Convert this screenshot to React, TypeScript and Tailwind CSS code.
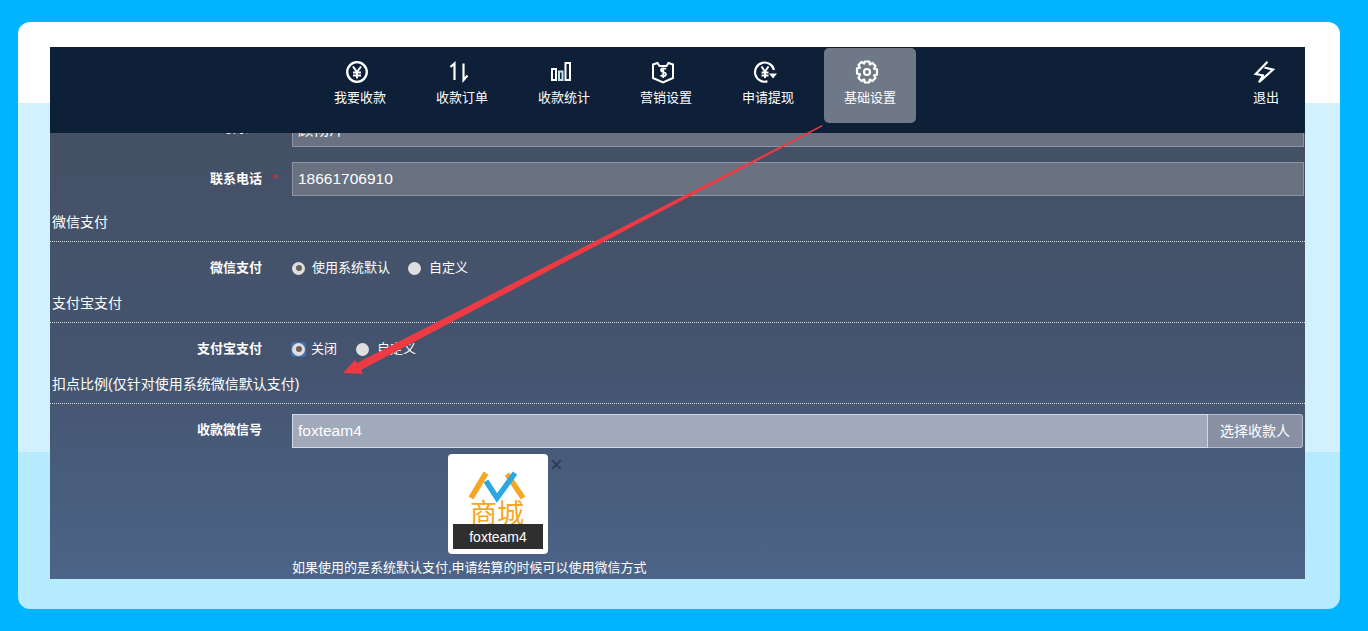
const cjk = "font-['Liberation_Sans','Noto_Sans_CJK_SC',sans-serif]";

const Yuan = () => (
  <svg width="24" height="24" viewBox="0 0 24 24" fill="none" stroke="white" strokeWidth="2.3">
    <circle cx="12" cy="12" r="9.8" />
    <path d="M8 6.500l4 5.500 4-5.500M12 12v6.500M8 12.500h8M8 15.500h8" strokeWidth="2" />
  </svg>
);
const Sort = () => (
  <svg width="24" height="24" viewBox="0 0 24 24" fill="none" stroke="white" strokeWidth="2.200">
    <path d="M3.500 7L7.500 3.500V20" />
    <path d="M16.500 3.500V20L20.500 15.500" />
  </svg>
);
const Bars = () => (
  <svg width="24" height="24" viewBox="0 0 24 24" fill="none" stroke="white" strokeWidth="2">
    <rect x="3" y="9" width="4" height="11" />
    <rect x="10" y="11.500" width="3.500" height="8.500" stroke="#bfe6ee" />
    <rect x="16.500" y="3" width="4.500" height="17" />
  </svg>
);
const Shield = () => (
  <svg width="24" height="24" viewBox="0 0 24 24" fill="none" stroke="white" strokeWidth="2">
    <path d="M2 4.500L6.500 3l2 3h7l2-3L22 4.500V18L12 22.500 2 18z" />
    <path d="M15 9c-1-1-5-1-5 1.200 0 2.500 5 1.400 5 4 0 2.200-4 2.300-5.500 1M12.200 7.500v10.500" strokeWidth="1.800" />
  </svg>
);
const Withdraw = () => (
  <svg width="24" height="24" viewBox="0 0 24 24" fill="none" stroke="white" strokeWidth="2.200">
    <path d="M21 10A9.600 9.600 0 1 0 14.500 21.300" />
    <path d="M8.500 6.500l3.500 5 3.500-5M12 11.500V18M8.500 12.500h7M8.500 15.500h7" strokeWidth="2" />
    <path d="M16 13.500l4 5 4-5z" fill="white" stroke="none" />
  </svg>
);
const Gear = () => (
  <svg width="24" height="24" viewBox="0 0 24 24" fill="none" stroke="white" strokeWidth="2.200">
    <circle cx="12" cy="12" r="3" />
    <path d="M9.800 1.500h4.400l.6 3 2.700-1.500 3 3-1.500 2.700 3 .7v5.200l-3 .7 1.500 2.700-3 3-2.700-1.500-.6 3H9.800l-.6-3-2.700 1.500-3-3L5 14.300l-3-.7V8.400l3-.7L3.500 5l3-3 2.700 1.500z" strokeLinejoin="round" />
  </svg>
);
const Bolt = () => (
  <svg width="24" height="24" viewBox="0 0 24 24" fill="none" stroke="white" strokeWidth="2.200">
    <path d="M14.500 1.700L2.700 14l8.300 1.500" />
    <path d="M11.500 7.500l8.500 2L6 22.300l4-7" />
  </svg>
);

const Radio = ({ checked }: { checked?: boolean }) => (
  <span className="flex h-[13px] w-[13px] items-center justify-center rounded-full bg-[#dfdfe2]">
    {checked && <span className="h-[6px] w-[6px] rounded-full bg-[#6b6355]" />}
  </span>
);

const navItems = [
  { name: '我要收款', icon: Yuan },
  { name: '收款订单', icon: Sort },
  { name: '收款统计', icon: Bars },
  { name: '营销设置', icon: Shield },
  { name: '申请提现', icon: Withdraw },
  { name: '基础设置', icon: Gear, active: true },
];

const SectionTitle = ({ children, className }: { children: string; className: string }) => (
  <div className={`border-b border-dotted border-[#d5dae2] pb-[10px] pl-[2px] text-[14px] leading-[18px] text-white ${className}`}>
    {children}
  </div>
);

const Label = ({ children }: { children: React.ReactNode }) => (
  <div className="w-[212px] shrink-0 text-right text-[13px] font-bold leading-[18px] text-white">{children}</div>
);

export default function App() {
  return (
    <div className={`h-[631px] w-[1368px] overflow-hidden bg-[#00b4ff] pl-[18px] pt-[22px] ${cjk}`}>
      <div className="h-[587px] w-[1322px] rounded-[12px] bg-[linear-gradient(to_bottom,#ffffff_81px,#d2f1ff_81px,#d2f1ff_430px,#b5eaff_430px)] pl-[32px] pt-[25px]">
        <div className="relative h-[532px] w-[1255px] overflow-hidden bg-[linear-gradient(to_bottom,#454f62,#44546f_60%,#4c6488)]">
          <div className="relative z-10 flex h-[86px] bg-[#0e1f38] pl-[264px] pt-px">
            {navItems.map((item) => (
              <div
                key={item.name}
                className={`mr-[10px] flex h-[75px] w-[92px] flex-col items-center rounded-[5px] pt-[12px] ${item.active ? 'bg-[#6f7886]' : ''}`}
              >
                <span className="mr-[6px]"><item.icon /></span>
                <span className="mt-[5px] text-[13px] leading-[18px] text-white">{item.name}</span>
              </div>
            ))}
            <div className="ml-auto mr-[-7px] flex h-[75px] w-[92px] flex-col items-center pt-[12px]">
              <span className="mr-[2px]"><Bolt /></span>
              <span className="mt-[5px] text-[13px] leading-[18px] text-white">退出</span>
            </div>
          </div>

          <div className="mt-[-20px] flex h-[34px]">
            <div className="pt-[6px]"><Label>联系人</Label></div>
            <div className="ml-[30px] flex h-[34px] w-[1012px] items-center border border-[#8d95a3] bg-[#6a7282] pl-[5px] text-[15.5px] text-white">
              顾彻洋
            </div>
          </div>

          <div className="mt-[15px] flex items-center">
            <Label>联系电话</Label>
            <span className="ml-[10px] w-[20px] text-[13px] font-bold leading-[18px] text-[#c0303f]">*</span>
            <div className="flex h-[34px] w-[1012px] items-center border border-[#8d95a3] bg-[#6a7282] pl-[5px] text-[15.5px] text-white">
              18661706910
            </div>
          </div>

          <SectionTitle className="mt-[17px]">微信支付</SectionTitle>

          <div className="mt-[17px] flex items-center">
            <Label>微信支付</Label>
            <div className="ml-[30px] flex items-center text-[13px] leading-[18px] text-white">
              <Radio checked />
              <span className="ml-[7px]">使用系统默认</span>
              <span className="ml-[18px]"><Radio /></span>
              <span className="ml-[8px]">自定义</span>
            </div>
          </div>

          <SectionTitle className="mt-[17px]">支付宝支付</SectionTitle>

          <div className="mt-[17px] flex items-center">
            <Label>支付宝支付</Label>
            <div className="ml-[29px] flex items-center text-[13px] leading-[18px] text-white">
              <span className="flex h-[15px] w-[15px] items-center justify-center rounded-[3px] bg-[#3f6fb5]"><Radio checked /></span>
              <span className="ml-[5px]">关闭</span>
              <span className="ml-[19px]"><Radio /></span>
              <span className="ml-[8px]">自定义</span>
            </div>
          </div>

          <SectionTitle className="mt-[17px]">扣点比例(仅针对使用系统微信默认支付)</SectionTitle>

          <div className="mt-[10px] flex">
            <div className="pt-[7px]"><Label>收款微信号</Label></div>
            <div className="ml-[30px] flex h-[34px] w-[1011px] text-white">
              <div className="flex flex-1 items-center border border-[#d5dae2] bg-[#a0aaba] pl-[5px] text-[15.5px]">foxteam4</div>
              <div className="flex w-[95px] items-center justify-center rounded-r-[3px] border border-l-0 border-[#b3bbc8] bg-[#8891a3] text-[14px]">选择收款人</div>
            </div>
          </div>

          <div className="ml-[398px] mt-[6px] flex items-start">
            <div className="relative h-[100px] w-[100px] overflow-hidden rounded-[4px] bg-white">
              <svg className="absolute left-0 top-0" width="100" height="50" viewBox="0 0 100 50" fill="none">
                <path d="M23 44L38 19M59 20l16 24" stroke="#f5a623" strokeWidth="5.500" />
                <path d="M38 27l11 17 18-25" stroke="#2aa8e0" strokeWidth="5.500" />
              </svg>
              <div className="absolute left-[22px] top-[45px] text-[27px] leading-[30px] text-[#f5a623]">商城</div>
              <div className="absolute bottom-[5px] left-[5px] flex h-[25px] w-[90px] items-center justify-center bg-[#2f2f2f] pt-[2px] text-[14px] text-white">foxteam4</div>
            </div>
            <span className="ml-[2px] mt-[1px] text-[22px] leading-[20px] text-[#2e3a50]">×</span>
          </div>

          <div className="ml-[242px] mt-[5px] text-[13px] leading-[18px] text-white">如果使用的是系统默认支付,申请结算的时候可以使用微信方式</div>

          {/* annotation arrow over the form */}
          <svg className="absolute left-0 top-0 z-20" width="1255" height="532" viewBox="0 0 1255 532">
            <path d="M772 78L307 316l-2-3-12 13 20 1-2-4L773 79z" fill="#ee3a42" />
          </svg>
        </div>
      </div>
    </div>
  );
}
